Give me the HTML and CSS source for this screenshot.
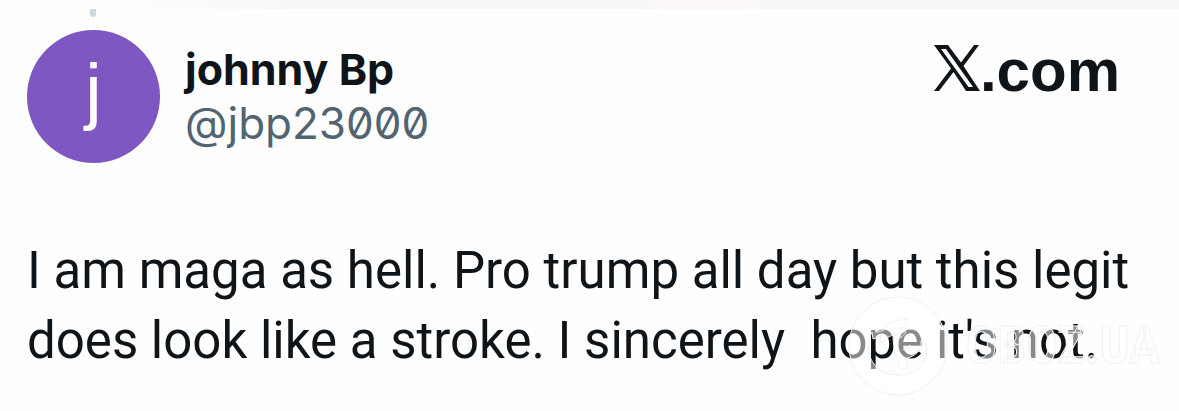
FILE: index.html
```html
<!DOCTYPE html>
<html lang="en">
<head>
<meta charset="utf-8">
<meta name="viewport" content="width=device-width, initial-scale=1">
<title>johnny Bp on X</title>
<link rel="stylesheet" href="styles.css">
</head>
<body>
<div class="strip"></div>
<article class="post">
  <header class="head">
    <div class="avatar"><span class="thread"></span>j</div>
    <div class="author">
      <div class="name">johnny Bp</div>
      <div class="handle">@jbp23000</div>
    </div>
    <div class="brand">
      <svg class="x-logo" viewBox="0 0 46 46" role="img" aria-label="X"><path fill="currentColor" fill-rule="evenodd" d="M0 0H14L27 17.500L40 0H45L29.500 21L46 46H32L19.500 27L5 46H0L17 23.500ZM7 4L34.500 42H39L12 4Z"/></svg><span>.com</span>
    </div>
  </header>
  <p class="text">I am maga as hell. Pro trump all day but this legit<br>does look like a stroke. I sincerely&nbsp; hope it's not.</p>
  <div class="watermark">
    <svg class="emblem" viewBox="0 0 104 104" aria-hidden="true">
      <path class="veil" fill-rule="evenodd" d="M52 3A49 49 0 1 1 51.900 3ZM26 38C16 59 28 81 52 81C70 81 84 66 80 50L75 47C76 56 70 62 61 64C62 69 61 74 58 75C54 76 52 73 52 69C53 63 48 61 48 55C48 49 46 45 48 41C41 42 39 48 33 49L35 42L27 45Z"/>
      <path class="crest" d="M31 39C34 36 37 38 39 35C42 26 52 27 62 25C61 31 57 33 54 34L60 37C53 40 51 41 48 41M50 49C53 43 57 43 60 38M57 56L64 51L62 60"/>
    </svg>
    <span>OBOZ.UA</span>
  </div>
</article>
</body>
</html>
```
FILE: styles.css
```css
* { box-sizing: border-box; }
body {
  margin: 0;
  background: #fefefe;
  color: #0f1419;
  font-family: Inter, "Liberation Sans", sans-serif;
}
.strip {
  height: 9px;
  background: linear-gradient(90deg, #fefefe 0 9%, #fafafa 18%, #f7f7f7 28% 54%, #fdf8f8 56% 63%, #f8f8f8 65%);
}
.post {
  position: relative;
  padding: 21px 28px 36px 27px;
}
.head {
  display: flex;
  align-items: flex-start;
}
.avatar {
  position: relative;
  width: 133px;
  height: 133px;
  flex: none;
  border-radius: 50%;
  background: #7e57c2;
  color: #fff;
  font: 74px/121px "Liberation Sans", sans-serif;
  text-align: center;
}
.thread {
  position: absolute;
  left: 63px;
  top: -21px;
  width: 6px;
  height: 8px;
  border-radius: 0 0 3px 3px;
  background: #cfd9de;
}
.author {
  flex: 1;
  padding: 12px 0 0 25px;
  font-size: 44px;
  line-height: 54px;
}
.name { font-size: 43px; font-weight: 700; }
.handle {
  color: #536471;
  font-feature-settings: "zero";
}
.brand {
  display: flex;
  align-items: baseline;
  padding: 8px 31px 0 0;
  font: 700 60px/66px "Liberation Sans", sans-serif;
}
.x-logo {
  width: 46px;
  height: 46px;
}
.text {
  margin: 73px 0 0;
  font: 51px/70px Roboto, sans-serif;
}
.watermark {
  position: absolute;
  right: 19px;
  bottom: 14px;
  display: flex;
  align-items: center;
  gap: 16px;
  color: rgba(255, 255, 255, 0.5);
  font: 700 52px/60px "Liberation Sans Narrow", "Roboto Condensed", "Liberation Sans", sans-serif;
  -webkit-text-stroke: 1px #f1f1f1;
}
.emblem {
  width: 104px;
  height: 104px;
}
.veil {
  fill: rgba(255, 255, 255, 0.5);
  stroke: #f0f0f0;
  stroke-width: 1;
}
.crest {
  fill: none;
  stroke: #f0f0f0;
  stroke-width: 1;
}
```
